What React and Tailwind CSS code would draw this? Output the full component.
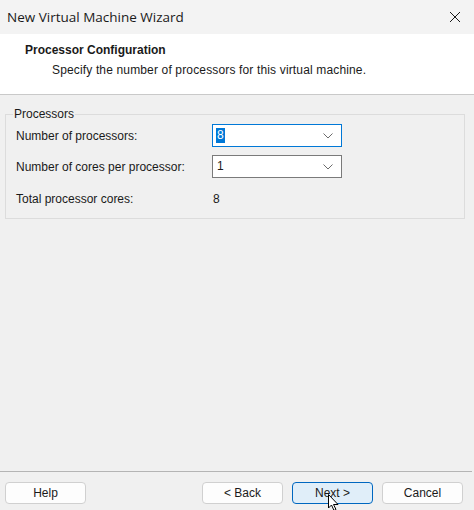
import React from 'react';

const Chevron = () => (
  <svg width="10" height="6" viewBox="0 0 10 6" className="shrink-0">
    <path d="M0.5 0.5 L5 5 L9.5 0.5" fill="none" stroke="#6b6b6b" strokeWidth="1" />
  </svg>
);

const Select = ({ value, focused }) => (
  <div
    className={`flex items-center justify-between w-[130px] h-[23px] pl-[3px] pr-[8px] bg-white border ${
      focused ? 'border-[#0078d7]' : 'border-[#7a7a7a]'
    }`}
  >
    {focused ? (
      <span className="bg-[#0078d7] text-white px-[1px] leading-[15px]">{value}</span>
    ) : (
      <span className="leading-[15px] px-[1px]">{value}</span>
    )}
    <Chevron />
  </div>
);

const Button = ({ children, primary, className = '' }) => (
  <button
    className={`h-[22px] w-[81px] rounded-[4px] border text-[12px] text-[#1a1a1a] ${
      primary ? 'bg-[#e0eef9] border-[#0067c0]' : 'bg-[#fdfdfd] border-[#d0d0d0]'
    } ${className}`}
  >
    {children}
  </button>
);

export default function App() {
  return (
    <div className="w-[474px] h-[510px] bg-[#f0f0f0] flex flex-col font-['Liberation_Sans',Tahoma,sans-serif] text-[12px] text-[#1a1a1a] overflow-hidden">
      {/* Title bar */}
      <div className="h-[34px] bg-[#f3f3f3] flex items-center justify-between pl-[7px] pr-[13px]">
        <span className="font-['Open_Sans',sans-serif] text-[13.5px] text-[#1a1a1a]">New Virtual Machine Wizard</span>
        <svg width="12" height="12" viewBox="0 0 12 12">
          <path d="M1 1 L11 11 M11 1 L1 11" stroke="#1a1a1a" strokeWidth="1" />
        </svg>
      </div>

      {/* Header */}
      <div className="h-[61px] bg-white border-b border-[#c9c9c9] pl-[25px] pt-[8px]">
        <div className="font-bold leading-[16px]">Processor Configuration</div>
        <div className="pl-[27px] pt-[4px] leading-[16px] tracking-[0.15px]">Specify the number of processors for this virtual machine.</div>
      </div>

      {/* Body */}
      <div className="flex-1 pl-[5px] pr-[9px] pt-[19px]">
        <div className="relative border border-[#dcdcdc] h-[105px] pl-[10px] pt-[9px]">
          <span className="absolute -top-[8px] left-[7px] bg-[#f0f0f0] px-[1px] leading-[14px]">Processors</span>
          <div className="flex items-center">
            <span className="w-[196px]">Number of processors:</span>
            <Select value="8" focused />
          </div>
          <div className="flex items-center mt-[8px]">
            <span className="w-[196px]">Number of cores per processor:</span>
            <Select value="1" />
          </div>
          <div className="flex items-center mt-[12px]">
            <span className="w-[197px]">Total processor cores:</span>
            <span>8</span>
          </div>
        </div>
      </div>

      {/* Footer */}
      <div className="h-[39px] border-t border-[#b4b4b4] mr-[2px] flex items-start pt-[10px] pl-[5px] pr-[9px]">
        <Button>Help</Button>
        <div className="flex-1" />
        <Button>&lt; Back</Button>
        <div className="relative ml-[9px]">
          <Button primary>Next &gt;</Button>
          <svg className="absolute left-[36px] top-[12px]" width="12" height="18" viewBox="0 0 12 18">
            <path d="M0.5 0.5 L0.5 14 L3.5 11 L6 16.5 L8 15.5 L5.5 10.5 L10 10.5 Z" fill="#ffffff" stroke="#000000" strokeWidth="1" />
          </svg>
        </div>
        <Button className="ml-[9px]">Cancel</Button>
      </div>
    </div>
  );
}
